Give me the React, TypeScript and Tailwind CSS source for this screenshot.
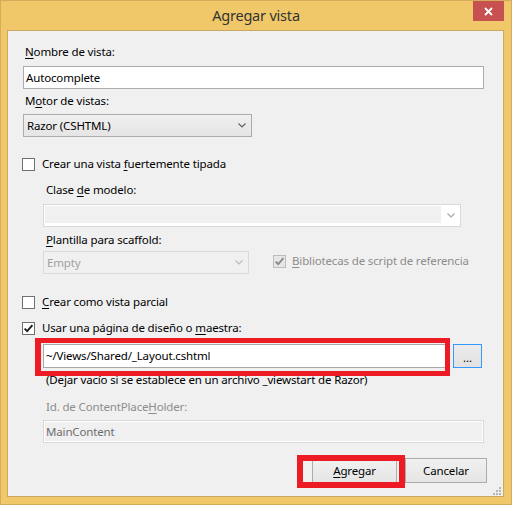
import React from "react";

function Check({ checked, disabled }: { checked?: boolean; disabled?: boolean }) {
  return (
    <div
      className={
        "w-[13px] h-[13px] border flex items-center justify-center shrink-0 " +
        (disabled ? "border-[#bcbcbc] bg-[#e6e6e6]" : "border-[#707070] bg-white")
      }
    >
      {checked && (
        <svg width="11" height="11" viewBox="0 0 11 11">
          <path
            d="M1.6 5.6 L4.2 8.2 L9.4 2.2"
            fill="none"
            stroke={disabled ? "#8a8a8a" : "#1f1f1f"}
            strokeWidth="1.9"
          />
        </svg>
      )}
    </div>
  );
}

function Chevron({ color }: { color: string }) {
  return (
    <svg width="8" height="5" viewBox="0 0 8 5">
      <polyline points="0.5,0.5 4,4 7.5,0.5" fill="none" stroke={color} strokeWidth="1.2" />
    </svg>
  );
}

function U({ children }: { children: React.ReactNode }) {
  return <span className="underline decoration-1 underline-offset-[2px]">{children}</span>;
}

export default function App() {
  return (
    <div className="w-[512px] h-[505px] bg-[#f0c86a] border border-[#d4ad5c] flex flex-col font-['Noto_Sans',sans-serif] text-[11.5px] tracking-[-0.15px] text-black overflow-hidden">
      {/* Title bar */}
      <div className="h-[29px] shrink-0 grid grid-cols-[1fr_auto_1fr] items-start">
        <div />
        <div className="text-[14.5px] leading-[20px] text-[#333333] mt-[4px] tracking-[-0.2px]">Agregar vista</div>
        <div className="flex justify-end pr-[7px]">
          <div className="w-[31px] h-[20px] bg-[#c75050] flex items-center justify-center">
            <svg width="9" height="9" viewBox="0 0 9 9">
              <path d="M1 1 L8 8 M8 1 L1 8" stroke="#ffffff" strokeWidth="1.8" />
            </svg>
          </div>
        </div>
      </div>

      {/* Client area */}
      <div className="relative flex-1 ml-[6px] mr-[7px] mb-[7px] border border-[#c9a95f] bg-[#f0f0f0] pl-[15px] pr-[19px] flex flex-col">
        <div className="mt-[13px] h-[16px] leading-[16px] pl-[2px]">
          <U>N</U>ombre de vista:
        </div>
        <div className="mt-[6px] h-[23px] border border-[#abadb3] bg-white px-[2px] leading-[21px]">Autocomplete</div>

        <div className="mt-[4px] h-[16px] leading-[16px] pl-[2px]">
          M<U>o</U>tor de vistas:
        </div>
        <div className="mt-[5px] h-[23px] w-[229px] border border-[#acacac] bg-gradient-to-b from-[#f0f0f0] to-[#e5e5e5] flex items-center pl-[3px] pr-[5px]">
          <span className="flex-1 leading-[21px]">Razor (CSHTML)</span>
          <Chevron color="#606060" />
        </div>

        <div className="mt-[19px] h-[16px] flex items-start ml-[-1px]">
          <div className="mt-[2px]">
            <Check />
          </div>
          <span className="ml-[7px] leading-[16px]">
            Crear una vista <U>f</U>uertemente tipada
          </span>
        </div>

        <div className="pl-[20px] flex flex-col">
          <div className="mt-[10px] h-[16px] leading-[16px] pl-[3px]">
            Clase <U>d</U>e modelo:
          </div>
          <div className="mt-[6px] h-[23px] w-[418px] border border-[#d9d9d9] bg-white flex">
            <div className="flex-1 mt-[1px] mb-[3px] ml-[1px] bg-[#f0f0f0]" />
            <div className="w-[19px] flex items-center justify-center">
              <Chevron color="#a8a8a8" />
            </div>
          </div>

          <div className="mt-[5px] h-[16px] leading-[16px] pl-[3px]">
            <U>P</U>lantilla para scaffold:
          </div>
          <div className="mt-[3px] flex items-start">
            <div className="h-[23px] w-[206px] border border-[#d9d9d9] bg-[#f0f0f0] flex items-center pl-[3px] pr-[5px] text-[#a0a0a0]">
              <span className="flex-1 leading-[21px]">Empty</span>
              <Chevron color="#bcbcbc" />
            </div>
            <div className="ml-[24px] mt-[4px]">
              <Check checked disabled />
            </div>
            <span className="ml-[6px] mt-[2px] leading-[16px] text-[#8d8d8d]">
              <U>B</U>ibliotecas de script de referencia
            </span>
          </div>
        </div>

        <div className="mt-[20px] h-[16px] flex items-start ml-[-1px]">
          <div className="mt-[2px]">
            <Check />
          </div>
          <span className="ml-[7px] leading-[16px]">
            <U>C</U>rear como vista parcial
          </span>
        </div>

        <div className="mt-[10px] h-[16px] flex items-start ml-[-1px]">
          <div className="mt-[2px]">
            <Check checked />
          </div>
          <span className="ml-[7px] leading-[16px]">
            Usar una página de diseño o <U>m</U>aestra:
          </span>
        </div>

        <div className="pl-[20px] flex flex-col">
          <div className="mt-[8px] flex items-start">
            <div className="h-[24px] w-[403px] border border-[#a8a8a8] bg-white px-[2px] leading-[22px]">
              ~/Views/Shared/_Layout.cshtml
            </div>
            <div className="ml-[7px] h-[24px] w-[29px] border border-[#3399ff] bg-gradient-to-b from-[#ececec] to-[#e2e2e2] flex items-end justify-center leading-[18px]">
              ...
            </div>
          </div>
          <div className="mt-[4px] h-[16px] leading-[16px] pl-[3px]">
            (Dejar vacío si se establece en un archivo _viewstart de Razor)
          </div>
          <div className="mt-[11px] h-[16px] leading-[16px] pl-[3px] text-[#8d8d8d]">
            Id. de ContentPlace<U>H</U>older:
          </div>
          <div className="mt-[5px] h-[23px] border border-[#d9d9d9] bg-white p-[1px]">
            <div className="h-full bg-[#f0f0f0] px-[1px] leading-[19px] text-[#6d6d6d]">MainContent</div>
          </div>
        </div>

        <div className="mt-[15px] flex justify-end gap-[8px] mr-[-3px]">
          <div className="h-[25px] w-[85px] border border-[#acacac] bg-gradient-to-b from-[#f0f0f0] to-[#e5e5e5] flex items-center justify-center leading-[23px]">
            <U>A</U>gregar
          </div>
          <div className="h-[25px] w-[82px] border border-[#acacac] bg-gradient-to-b from-[#f0f0f0] to-[#e5e5e5] flex items-center justify-center leading-[23px]">
            Cancelar
          </div>
        </div>

        {/* resize grip */}
        <svg className="absolute right-[2px] bottom-[1px]" width="9" height="9" viewBox="0 0 9 9">
          <rect x="7" y="1" width="2" height="2" fill="#b4b4b4" />
          <rect x="4" y="4" width="2" height="2" fill="#b4b4b4" />
          <rect x="7" y="4" width="2" height="2" fill="#b4b4b4" />
          <rect x="1" y="7" width="2" height="2" fill="#b4b4b4" />
          <rect x="4" y="7" width="2" height="2" fill="#b4b4b4" />
          <rect x="7" y="7" width="2" height="2" fill="#b4b4b4" />
        </svg>

        {/* red annotation frames */}
        <div className="absolute left-[27px] top-[307px] w-[415px] h-[38px] border-[5px] border-l-[6px] border-[#ed1c24] pointer-events-none" />
        <div className="absolute left-[289px] top-[424px] w-[108px] h-[33px] border-[6px] border-[#ed1c24] pointer-events-none" />
      </div>
    </div>
  );
}
